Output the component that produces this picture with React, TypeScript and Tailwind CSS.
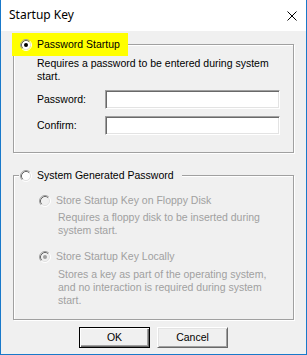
import React from "react";

function Radio({ checked, disabled }: { checked?: boolean; disabled?: boolean }) {
  return (
    <svg width="12" height="12" viewBox="0 0 12 12" className="shrink-0">
      <circle cx="6" cy="6" r="4.2" fill={disabled ? "#f0f0f0" : "#ffffff"} />
      <path d="M2.11 9.89 A5.5 5.5 0 0 1 9.89 2.11" fill="none" stroke="#a0a0a0" strokeWidth="1" />
      <path d="M9.89 2.11 A5.5 5.5 0 0 1 2.11 9.89" fill="none" stroke="#ffffff" strokeWidth="1" />
      <path d="M2.82 9.18 A4.5 4.5 0 0 1 9.18 2.82" fill="none" stroke="#696969" strokeWidth="1" />
      <path d="M9.18 2.82 A4.5 4.5 0 0 1 2.82 9.18" fill="none" stroke="#e3e3e3" strokeWidth="1" />
      {checked && <circle cx="6" cy="6" r="2" fill={disabled ? "#a0a0a0" : "#000000"} />}
    </svg>
  );
}

function Field({ label }: { label: string }) {
  return (
    <div className="flex items-center h-[19px]">
      <span className="w-[68px] leading-[13px]">{label}</span>
      <div className="w-[175px] h-[19px] bg-white border border-t-[#a0a0a0] border-l-[#a0a0a0] border-r-white border-b-white shadow-[inset_1px_1px_0_#696969,inset_-1px_-1px_0_#e3e3e3]" />
    </div>
  );
}

function Button({ children, isDefault }: { children: React.ReactNode; isDefault?: boolean }) {
  return (
    <div
      className={
        "w-[71px] h-[21px] flex items-center justify-center bg-[#f0f0f0] " +
        (isDefault
          ? "border border-black shadow-[inset_1px_1px_0_#ffffff,inset_-1px_-1px_0_#696969,inset_-2px_-2px_0_#a0a0a0]"
          : "border border-t-white border-l-white border-r-[#696969] border-b-[#696969] shadow-[inset_1px_1px_0_#e3e3e3,inset_-1px_-1px_0_#a0a0a0]")
      }
    >
      <span className="leading-[13px]">{children}</span>
    </div>
  );
}

export default function App() {
  return (
    <div className="w-[307px] h-[355px] flex flex-col border-x border-b border-[#1979ca] bg-[#f0f0f0] text-black font-['Liberation_Sans',Arial,sans-serif] text-[10.5px] leading-[13px] overflow-hidden">
      {/* Title bar */}
      <div className="h-[31px] shrink-0 bg-white flex items-center justify-between pl-[8px] pr-[9px]">
        <span className="font-['Noto_Sans','Open_Sans',sans-serif] text-[12px] leading-[16px] text-[#000] pb-[1px]">Startup Key</span>
        <svg width="10" height="10" viewBox="0 0 10 10">
          <path d="M0.5 0.5 L9.5 9.5 M9.5 0.5 L0.5 9.5" stroke="#000" strokeWidth="1" />
        </svg>
      </div>

      {/* Body */}
      <div className="flex flex-col pt-[13px] px-[12px]">
        {/* Group 1 */}
        <div className="relative h-[109px] border border-[#a0a0a0] shadow-[1px_1px_0_#ffffff,inset_1px_1px_0_#ffffff] pt-[12px] pl-[23px]">
          <div className="absolute -top-[12px] -left-[2px] h-[23px] w-[116px] bg-[#ffff00] flex items-center gap-[5px] pl-[8px]">
            <Radio checked />
            <span>Password Startup</span>
          </div>
          <div className="w-[250px]">Requires a password to be entered during system start.</div>
          <div className="mt-[7px] flex flex-col gap-[7px]">
            <Field label="Password:" />
            <Field label="Confirm:" />
          </div>
        </div>

        {/* Group 2 */}
        <div className="relative mt-[22px] h-[145px] border border-[#a0a0a0] shadow-[1px_1px_0_#ffffff,inset_1px_1px_0_#ffffff] pt-[18px] pl-[25px]">
          <div className="absolute -top-[12px] left-[5px] h-[23px] bg-[#f0f0f0] flex items-center gap-[5px] pl-[1px] pr-[8px]">
            <Radio />
            <span>System Generated Password</span>
          </div>
          <div className="flex flex-col text-[#a0a0a0]">
            <div className="flex items-center gap-[5px] h-[13px]">
              <Radio disabled />
              <span>Store Startup Key on Floppy Disk</span>
            </div>
            <div className="mt-[4px] ml-[19px] w-[230px]">
              Requires a floppy disk to be inserted during system start.
            </div>
            <div className="mt-[13px] flex items-center gap-[5px] h-[13px]">
              <Radio checked disabled />
              <span>Store Startup Key Locally</span>
            </div>
            <div className="mt-[5px] ml-[19px] w-[215px]">
              Stores a key as part of the operating system, and no interaction is required during system start.
            </div>
          </div>
        </div>

        {/* Buttons */}
        <div className="mt-[7px] flex justify-center gap-[7px]">
          <Button isDefault>OK</Button>
          <Button>Cancel</Button>
        </div>
      </div>
    </div>
  );
}
